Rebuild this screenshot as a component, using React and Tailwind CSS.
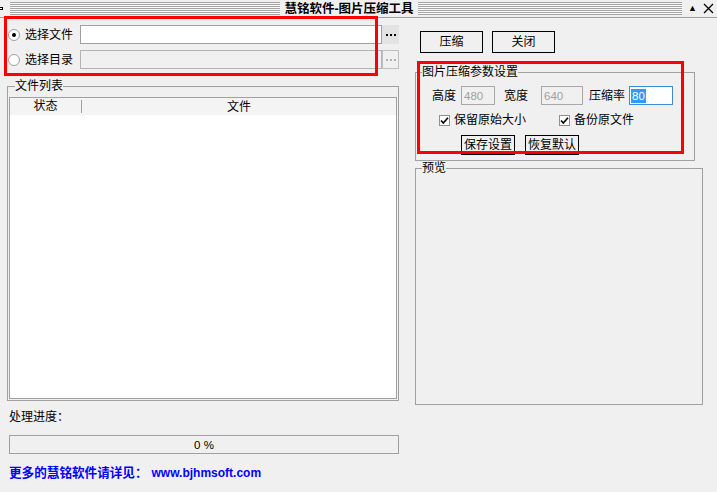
import React from 'react';

const Radio = ({ checked }) => (
    <span className="w-[12px] h-[12px] rounded-full border border-[#a0a0a0] bg-white flex items-center justify-center shrink-0">
        {checked && <span className="w-[4px] h-[4px] rounded-full bg-black"></span>}
    </span>
);

const Check = () => (
    <span className="w-[11px] h-[11px] border border-[#8f8f8f] bg-white flex items-center justify-center shrink-0">
        <svg width="9" height="9" viewBox="0 0 9 9">
            <path d="M1 4.5 L3.3 7 L8 1.8" stroke="#000" strokeWidth="1.6" fill="none" />
        </svg>
    </span>
);

const Dots = ({ color }) => (
    <div className="flex gap-[2px]">
        <span className={`w-[2px] h-[2px] ${color}`}></span>
        <span className={`w-[2px] h-[2px] ${color}`}></span>
        <span className={`w-[2px] h-[2px] ${color}`}></span>
    </div>
);

const Lines = ({ className }) => (
    <div className={`h-[13px] bg-[repeating-linear-gradient(to_bottom,#a3a3a3_0px,#a3a3a3_1px,#fafafa_1px,#fafafa_2px)] ${className}`}></div>
);

export default function App() {
    return (
        <div className="relative w-[717px] h-[492px] bg-[#f0f0f0] overflow-hidden font-['Liberation_Sans','Noto_Sans_CJK_SC',sans-serif] text-[12px] leading-[12px] text-black">
            {/* Title bar */}
            <div className="h-[18px] flex items-center border-b border-[#a0a0a0]">
                <div className="w-[10px] flex items-center">
                    <span className="w-[4px] h-[3px] border border-black bg-white ml-[-1px]"></span>
                </div>
                <Lines className="w-[270px]" />
                <div className="w-[138px] text-center font-bold text-[12.5px] pt-[1px]">慧铭软件-图片压缩工具</div>
                <Lines className="w-[264px]" />
                <div className="flex-1 flex items-center justify-end gap-[6px] pr-[3px]">
                    <span className="text-[9px] leading-[9px]">▲</span>
                    <svg width="11" height="11" viewBox="0 0 11 11">
                        <path d="M1 1 L10 10 M10 1 L1 10" stroke="#000" strokeWidth="1.3" />
                    </svg>
                </div>
            </div>

            <div className="flex">
                {/* Left column */}
                <div className="w-[415px] shrink-0 flex flex-col">
                    <div className="flex items-center mt-[7px] h-[19px] pl-[8px]">
                        <Radio checked />
                        <span className="ml-[5px] w-[55px]">选择文件</span>
                        <div className="w-[302px] h-[19px] border border-[#a0a0a0] bg-white"></div>
                        <div className="w-[17px] h-[19px] bg-[#e3e3e3] flex items-center justify-center">
                            <Dots color="bg-black" />
                        </div>
                    </div>
                    <div className="flex items-center mt-[6px] h-[19px] pl-[8px]">
                        <Radio />
                        <span className="ml-[5px] w-[55px]">选择目录</span>
                        <div className="w-[302px] h-[19px] border border-[#b4b4b4] bg-[#f0f0f0]"></div>
                        <div className="w-[17px] h-[19px] border border-[#c0c0c0] flex items-center justify-center">
                            <Dots color="bg-[#b0b0b0]" />
                        </div>
                    </div>

                    <fieldset className="ml-[7px] mt-[11px] w-[392px] h-[321px] border border-[#a0a0a0] px-[1px] pb-[1px]">
                        <legend className="ml-[6px] px-0 leading-[12px] h-[12px]">文件列表</legend>
                        <div className="mt-[5px] h-[302px] border border-[#a0a0a0] bg-white flex flex-col">
                            <div className="h-[17px] bg-[#f4f4f4] flex items-center">
                                <div className="w-[72px] text-center border-r border-[#a0a0a0] h-[13px] leading-[13px]">状态</div>
                                <div className="flex-1 text-center">文件</div>
                            </div>
                        </div>
                    </fieldset>

                    <div className="ml-[9px] mt-[10px]">处理进度：</div>
                    <div className="ml-[9px] mt-[12px] w-[390px] h-[19px] border border-[#a0a0a0] flex items-center justify-center text-[11.5px]">0 %</div>
                    <div className="ml-[9px] mt-[13px] text-[#0000ff] font-bold flex items-center">
                        <span className="text-[12.6px]">更多的慧铭软件请详见：</span>
                        <span className="ml-[4px] text-[12px]">www.bjhmsoft.com</span>
                    </div>
                </div>

                {/* Right column */}
                <div className="flex-1 flex flex-col">
                    <div className="flex mt-[13px] ml-[5px] gap-[9px]">
                        <div className="w-[63px] h-[22px] border border-black flex items-center justify-center">压缩</div>
                        <div className="w-[63px] h-[22px] border border-black flex items-center justify-center">关闭</div>
                    </div>

                    <fieldset className="mt-[13px] w-[280px] h-[95px] border border-[#a0a0a0]">
                        <legend className="ml-[6px] px-0 leading-[12px] h-[12px]">图片压缩参数设置</legend>
                        <div className="flex items-center mt-[8px] ml-[16px] h-[19px]">
                            <span className="w-[29px]">高度</span>
                            <div className="w-[34px] h-[19px] border border-[#a8a8a8] text-[#a0a0a0] text-[11.5px] flex items-center pl-[2px]">480</div>
                            <span className="ml-[9px] w-[37px]">宽度</span>
                            <div className="w-[42px] h-[19px] border border-[#a8a8a8] text-[#a0a0a0] text-[11.5px] flex items-center pl-[2px]">640</div>
                            <span className="ml-[6px] w-[40px]">压缩率</span>
                            <div className="w-[44px] h-[19px] border border-[#3c8cdc] bg-white flex items-center pl-[1px]">
                                <span className="bg-[#3399ff] text-white text-[11.5px] leading-[14px] px-[1px]">80</span>
                            </div>
                        </div>
                        <div className="flex items-center mt-[9px] ml-[23px]">
                            <Check />
                            <span className="ml-[4px] w-[105px]">保留原始大小</span>
                            <Check />
                            <span className="ml-[4px]">备份原文件</span>
                        </div>
                        <div className="flex mt-[9px] ml-[45px] gap-[10px]">
                            <div className="w-[54px] h-[20px] border border-black border-b-[2px] flex items-center justify-center">保存设置</div>
                            <div className="w-[54px] h-[20px] border border-black border-b-[2px] flex items-center justify-center">恢复默认</div>
                        </div>
                    </fieldset>

                    <fieldset className="mt-[1px] w-[288px] h-[243px] border border-[#a0a0a0]">
                        <legend className="ml-[6px] px-0 leading-[12px] h-[12px]">预览</legend>
                    </fieldset>
                </div>
            </div>

            {/* Red annotation boxes */}
            <div className="absolute left-[4px] top-[16px] w-[374px] h-[60px] border-[3px] border-[#ff0000] pointer-events-none"></div>
            <div className="absolute left-[417px] top-[61px] w-[267px] h-[93px] border-[3px] border-[#ff0000] pointer-events-none"></div>
        </div>
    );
}
